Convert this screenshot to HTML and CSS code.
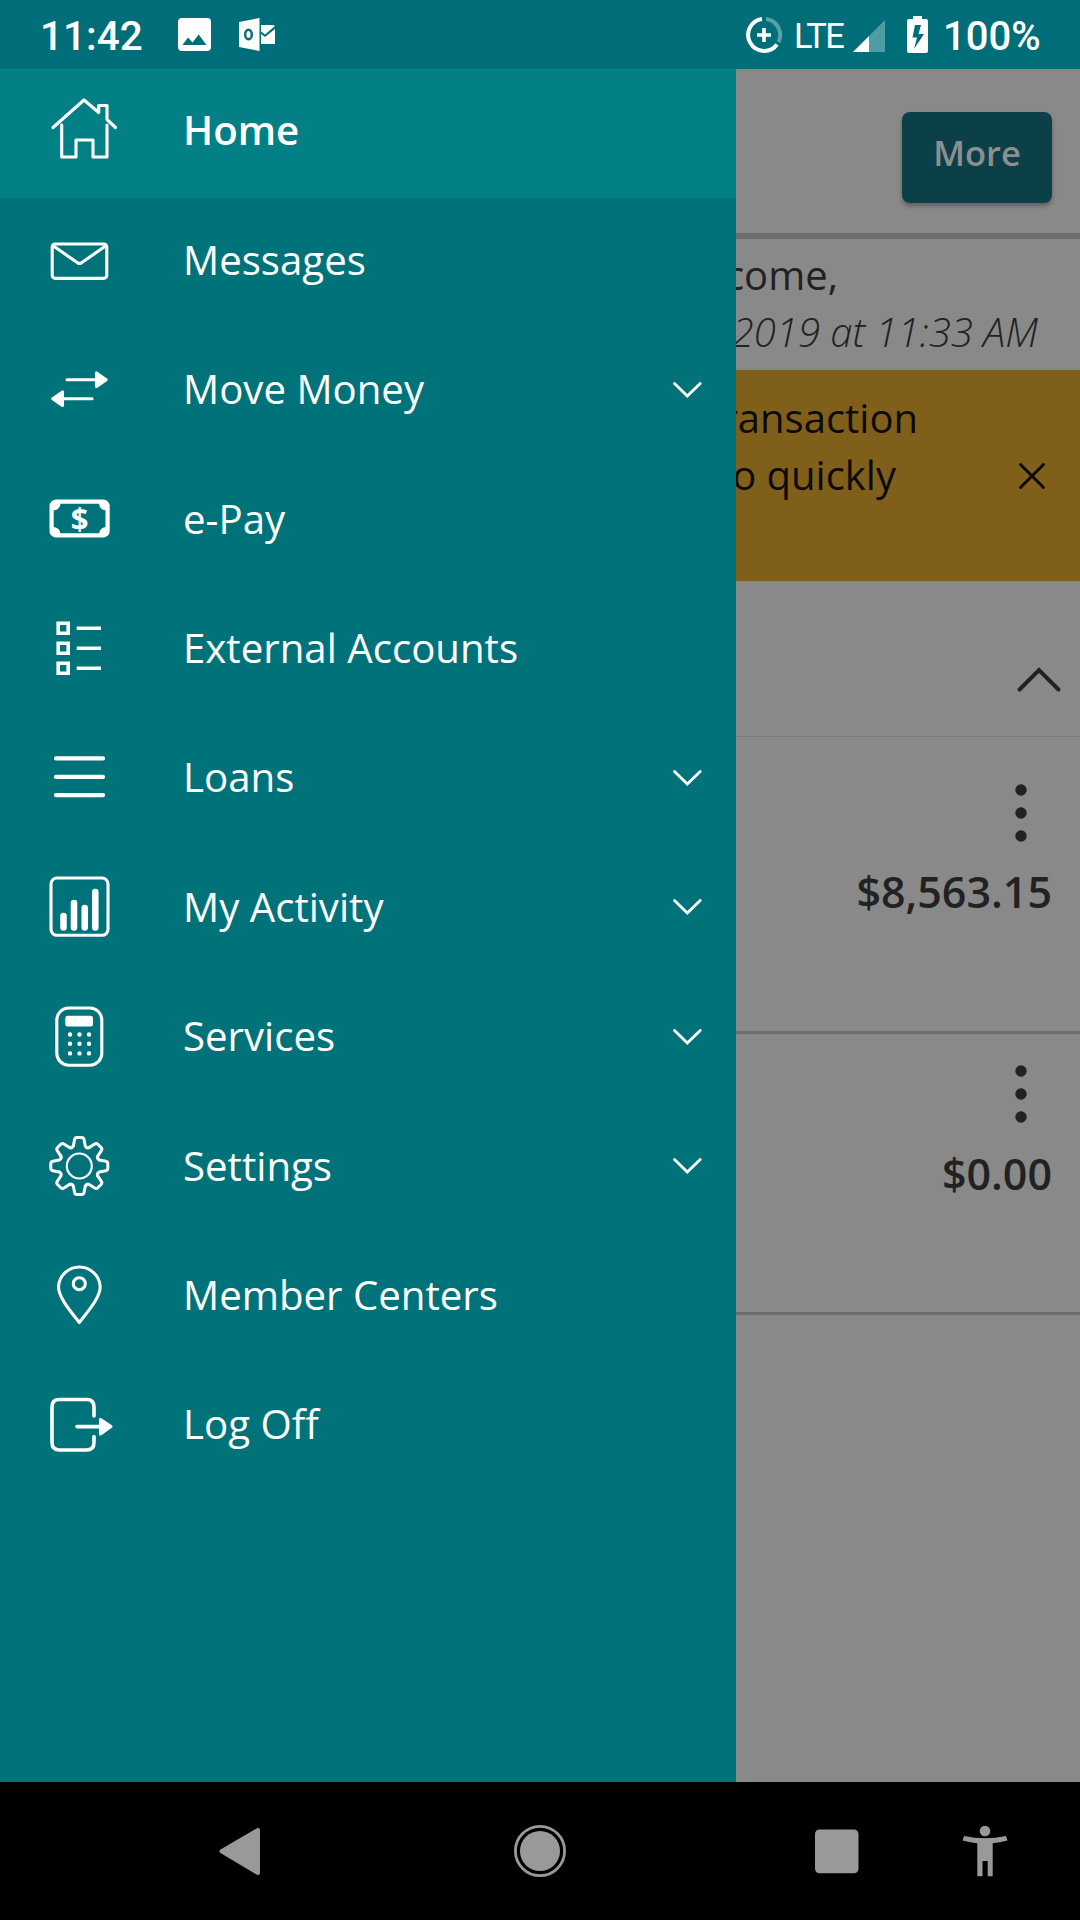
FILE: index.html
```html
<!DOCTYPE html>
<html lang="en">
  <head>
    <meta charset="utf-8" />
    <title>Home</title>
    <link rel="stylesheet" href="styles.css" />
  </head>
  <body>
    <header class="status-bar">
      <span class="clock">11:42</span>
      <svg class="photo-icon" width="34" height="34" viewBox="0 0 34 34">
        <path fill="#fff" fill-rule="evenodd" d="M4 0H29.500Q33 0 33 4V29Q33 33 29 33H4Q0 33 0 29V4Q0 0 4 0ZM4.500 27H28.500L20.700 16.500L14.500 24.500L10 19.500Z" />
      </svg>
      <svg class="outlook-icon" width="38" height="34" viewBox="0 0 38 34">
        <path fill="#fff" d="M0 4L20.500 0V33L0 29Z" />
        <path fill="#fff" d="M22 7H34L36 8L26 16.500L22 13.500ZM22 16L26 19L36 11V26H22Z" />
        <ellipse cx="9.500" cy="16.500" rx="3.300" ry="4.800" fill="none" stroke="#006e78" stroke-width="2.400" />
      </svg>
      <div class="status-right">
        <svg class="saver-icon" width="38" height="38" viewBox="0 0 38 38" fill="none" stroke="#fff">
          <path stroke-width="4" stroke-opacity=".35" d="M21 3.100A16 16 0 0 1 33.500 26" />
          <path stroke-width="4" d="M17 3.100A16 16 0 1 0 32 28.500" />
          <path stroke-width="3.600" d="M19 12V26M12 19H26" />
        </svg>
        <span class="network">LTE</span>
        <svg class="signal-icon" width="32" height="32" viewBox="0 0 32 32">
          <path fill="#4f9ca3" d="M32 0V32H16V16Z" />
          <path fill="#fff" d="M16 16V32H0Z" />
        </svg>
        <svg class="battery-icon" width="22" height="37" viewBox="0 0 22 37">
          <path fill="#fff" d="M6 0H15V3H19Q21 3 21 5V35Q21 37 19 37H2Q0 37 0 35V5Q0 3 2 3H6Z" />
          <path fill="#006e78" d="M14 9H8L5.500 21.500H10L7 33L17 18H11.500Z" />
        </svg>
        <span class="battery-level">100%</span>
      </div>
    </header>

    <main class="screen">
      <div class="page">
        <div class="page-header">
          <button class="more-btn">More</button>
        </div>
        <div class="welcome">
          <p class="greeting">Welcome,</p>
          <p class="last-login">2019 at 11:33 AM</p>
        </div>
        <div class="alert">
          <div class="alert-text">
            <p>transaction</p>
            <p class="second-line">to quickly</p>
          </div>
          <svg class="alert-close" width="30" height="30" viewBox="0 0 30 30">
            <path d="M3.500 3.500L26.500 26.500M26.500 3.500L3.500 26.500" />
          </svg>
        </div>
        <div class="section-header">
          <svg width="46" height="28" viewBox="0 0 46 28">
            <path d="M3.500 24.500L23 5L42.500 24.500" />
          </svg>
        </div>
        <div class="account first">
          <svg class="dots" width="12" height="58" viewBox="0 0 12 58">
            <circle cx="6" cy="6" r="5.700" /><circle cx="6" cy="29" r="5.700" /><circle cx="6" cy="52" r="5.700" />
          </svg>
          <span class="amount">$8,563.15</span>
        </div>
        <div class="account">
          <svg class="dots" width="12" height="58" viewBox="0 0 12 58">
            <circle cx="6" cy="6" r="5.700" /><circle cx="6" cy="29" r="5.700" /><circle cx="6" cy="52" r="5.700" />
          </svg>
          <span class="amount">$0.00</span>
        </div>
      </div>

      <nav class="drawer">
        <a class="item active">
          <svg class="icon" viewBox="0 0 80 80">
            <path d="M13 36.500L44 9L58.700 21.500V14.500H67V28.500L75.500 36.500M21.700 34V66H36V49H53V66H67V34" />
          </svg>
          <span>Home</span>
        </a>
        <a class="item">
          <svg class="icon" viewBox="0 0 80 80">
            <rect x="12.200" y="23" width="54.600" height="34.400" rx="3" />
            <path d="M13.500 25L37.500 41.800Q39.500 43 41.500 41.800L65.500 25" />
          </svg>
          <span>Messages</span>
        </a>
        <a class="item">
          <svg class="icon" viewBox="0 0 80 80">
            <path d="M27 29.700H57M23 48.700H52" />
            <path class="solid" d="M56.500 23V36.500L66.200 29.700ZM22.500 42V55.500L12.800 48.700Z" />
          </svg>
          <span>Move Money</span>
          <svg class="chevron" viewBox="0 0 32 18"><path d="M3.500 2.500L16.300 15L29.200 2.500" /></svg>
        </a>
        <a class="item">
          <svg class="icon" viewBox="0 0 80 80">
            <rect x="11.600" y="22.700" width="56" height="33.700" rx="4.500" stroke-width="4.200" />
            <path class="fill" d="M12 23H20.500Q21 31.500 12 31.500ZM67.500 23H59Q58.500 31.500 67.500 31.500ZM12 56.500H20.500Q21 48 12 48ZM67.500 56.500H59Q58.500 48 67.500 48Z" />
            <text class="dollar" x="39.500" y="50.500">$</text>
          </svg>
          <span>e-Pay</span>
        </a>
        <a class="item">
          <svg class="icon" viewBox="0 0 80 80">
            <path class="square" d="M18.200 14.300H28.200V24.300H18.200ZM18.200 34.300H28.200V44.300H18.200ZM18.200 54.300H28.200V64.300H18.200ZM36.700 19.300H61M36.700 39.300H61M36.700 59.300H61" />
          </svg>
          <span>External Accounts</span>
        </a>
        <a class="item">
          <svg class="icon" viewBox="0 0 80 80">
            <path stroke-width="4.200" d="M16 20.400H63M16 38.900H63M16 57.200H63" />
          </svg>
          <span>Loans</span>
          <svg class="chevron" viewBox="0 0 32 18"><path d="M3.500 2.500L16.300 15L29.200 2.500" /></svg>
        </a>
        <a class="item">
          <svg class="icon" viewBox="0 0 80 80">
            <rect x="11" y="11" width="57" height="57.300" rx="6" />
            <path stroke-width="6.500" d="M23.500 49V60.500M34 36V60.500M44.700 41V60.500M55.300 25V60.500" />
          </svg>
          <span>My Activity</span>
          <svg class="chevron" viewBox="0 0 32 18"><path d="M3.500 2.500L16.300 15L29.200 2.500" /></svg>
        </a>
        <a class="item">
          <svg class="icon" viewBox="0 0 80 80">
            <rect x="16.800" y="11" width="45" height="57.200" rx="12" />
            <rect class="fill" x="25.300" y="18.800" width="27.700" height="10.800" rx="2.500" />
            <path stroke-width="4.400" d="M30 37.500h0M39.500 37.500h0M49 37.500h0M30 46.800h0M39.500 46.800h0M49 46.800h0M30 56.400h0M39.500 56.400h0M49 56.400h0" />
          </svg>
          <span>Services</span>
          <svg class="chevron" viewBox="0 0 32 18"><path d="M3.500 2.500L16.300 15L29.200 2.500" /></svg>
        </a>
        <a class="item">
          <svg class="icon" viewBox="0 0 80 80">
            <defs>
              <path id="tooth" d="M-6 -20L-4.700 -26.500Q-4.300 -28.500 -2.300 -28.500H2.300Q4.300 -28.500 4.700 -26.500L6 -20Q7.200 -17.400 9.900 -18.400" />
            </defs>
            <g transform="translate(39.300 40)" stroke-width="3">
              <use href="#tooth" />
              <use href="#tooth" transform="rotate(45)" />
              <use href="#tooth" transform="rotate(90)" />
              <use href="#tooth" transform="rotate(135)" />
              <use href="#tooth" transform="rotate(180)" />
              <use href="#tooth" transform="rotate(225)" />
              <use href="#tooth" transform="rotate(270)" />
              <use href="#tooth" transform="rotate(315)" />
              <circle r="12.500" stroke-width="2.200" />
            </g>
          </svg>
          <span>Settings</span>
          <svg class="chevron" viewBox="0 0 32 18"><path d="M3.500 2.500L16.300 15L29.200 2.500" /></svg>
        </a>
        <a class="item">
          <svg class="icon" viewBox="0 0 80 80">
            <path d="M39.300 67.500C30 55.500 18.500 42.500 18.500 31.500A20.900 20.900 0 0 1 60.200 31.500C60.200 42.500 48.600 55.500 39.300 67.500Z" />
            <circle cx="39.300" cy="28.700" r="6" />
          </svg>
          <span>Member Centers</span>
        </a>
        <a class="item">
          <svg class="icon" viewBox="0 0 80 80">
            <path stroke-width="3.600" d="M54 31V22Q54 14.500 46.500 14.500H19.500Q12 14.500 12 22V57.500Q12 65 19.500 65H46.500Q54 65 54 57.500V51.500M37 41.600H61" />
            <path class="solid" d="M60.500 34.500V49L71 41.600Z" />
          </svg>
          <span>Log Off</span>
        </a>
      </nav>
    </main>

    <footer class="nav-bar">
      <svg width="1080" height="138" viewBox="0 0 1080 138">
        <path class="back" d="M221.500 69.300L258 48V91Z" />
        <circle cx="540" cy="69" r="20" />
        <circle class="ring" cx="540" cy="69" r="24.600" />
        <rect x="815" y="47.500" width="43.500" height="43.800" rx="4.500" />
        <circle cx="985" cy="49" r="5.300" />
        <path d="M964 54Q985 58.500 1006 54L1007.500 58.500Q1000 60.600 992.700 61.300V94.200H987.700V79H982.500V94.200H977.300V61.300Q970 60.600 962.700 58.500Z" />
      </svg>
    </footer>
  </body>
</html>
```
FILE: styles.css
```css
* {
  box-sizing: border-box;
}

body {
  margin: 0;
  width: 1080px;
  height: 1920px;
  display: flex;
  flex-direction: column;
  overflow: hidden;
  font-family: "Open Sans", sans-serif;
  background: #000;
}

p {
  margin: 0;
}

/* Status bar */
.status-bar {
  height: 69px;
  display: flex;
  align-items: center;
  padding-left: 40px;
  background: #006e78;
  color: #fff;
  font-family: Roboto, sans-serif;
  font-size: 40px;
}

.clock {
  width: 138px;
  font-size: 40.5px;
  font-weight: 500;
  padding-top: 3px;
}

.outlook-icon {
  margin-left: 27px;
}

.status-right {
  display: flex;
  align-items: center;
  margin-left: auto;
  padding-right: 38px;
}

.network {
  width: 59px;
  margin-left: 11px;
  padding-top: 2px;
  font-size: 34.5px;
  letter-spacing: -1.7px;
}

.signal-icon {
  margin-top: 3px;
}

.battery-icon {
  margin-left: 22px;
}

.battery-level {
  width: 99px;
  margin-left: 14px;
  padding-top: 3px;
  font-weight: 500;
}

/* Dimmed page behind the drawer */
.screen {
  position: relative;
  height: 1713px;
  background: #898989;
}

.page {
  color: #222;
}

.page-header {
  height: 170px;
  padding: 43px 28px 0 0;
  display: flex;
  justify-content: flex-end;
  border-bottom: 6px solid #6e6e6e;
}

.more-btn {
  width: 150px;
  height: 91px;
  padding: 0 0 11px;
  border: none;
  border-radius: 8px;
  background: #0c4048;
  color: #8b8f90;
  font-family: inherit;
  font-size: 34.5px;
  font-weight: 600;
  box-shadow: 0 3px 4px rgba(0, 0, 0, 0.3);
}

.welcome {
  height: 131px;
  padding-top: 7px;
  font-size: 40px;
  line-height: 57px;
  text-align: right;
}

.greeting {
  padding-right: 242px;
}

.last-login {
  padding-right: 42px;
  font-style: italic;
  font-weight: 300;
}

.alert {
  height: 211px;
  padding: 19px 33px 0 0;
  display: flex;
  justify-content: flex-end;
  background: #805f1b;
  color: #0d0b08;
  font-size: 40px;
  line-height: 57px;
  text-align: right;
}

.alert-text {
  margin-right: 99px;
}

.second-line {
  padding-right: 22px;
}

.alert-close {
  margin-top: 72px;
  fill: none;
  stroke: #0d0b08;
  stroke-width: 3;
  stroke-linecap: round;
}

.section-header {
  height: 156px;
  display: flex;
  justify-content: flex-end;
  padding: 84px 18px 0 0;
  border-bottom: 1px solid #7b7b7b;
}

.section-header svg {
  fill: none;
  stroke: #222;
  stroke-width: 4;
  stroke-linecap: round;
}

.account {
  height: 281px;
  padding: 31px 28px 0 0;
  display: flex;
  flex-direction: column;
  align-items: flex-end;
  border-bottom: 3px solid #6e6e6e;
}

.account.first {
  height: 297px;
  padding-top: 47px;
}

.dots {
  margin-right: 25px;
  fill: #222;
}

.amount {
  margin-top: 21px;
  font-size: 43px;
  font-weight: 600;
  line-height: 60px;
}

.first .amount {
  margin-top: 20px;
}

/* Drawer */
.drawer {
  position: absolute;
  top: 0;
  left: 0;
  width: 736px;
  height: 100%;
  background: #00737a;
}

.item {
  height: 129.37px;
  padding: 0 33px 5px 40px;
  display: flex;
  align-items: center;
  color: #fff;
  font-size: 40.2px;
}

.item span {
  margin: -2px 0 0 63px;
}

.active {
  background: #037f86;
  font-weight: 600;
}

.item.active span {
  margin-top: -4px;
}

.icon {
  width: 80px;
  height: 80px;
  fill: none;
  stroke: #fff;
  stroke-width: 3.1;
  stroke-linecap: round;
  stroke-linejoin: round;
}

.icon .solid {
  fill: #fff;
}

.icon .fill {
  fill: #fff;
  stroke: none;
}

.icon .square {
  stroke-width: 3.6;
  stroke-linecap: butt;
  stroke-linejoin: miter;
}

.icon .dollar {
  fill: #fff;
  stroke: none;
  font-size: 31px;
  font-weight: 700;
  text-anchor: middle;
}

.chevron {
  width: 32px;
  height: 18px;
  margin-left: auto;
  fill: none;
  stroke: #fff;
  stroke-width: 2.8;
  stroke-linecap: round;
}

/* System navigation */
.nav-bar {
  height: 138px;
  background: #000;
}

.nav-bar svg {
  display: block;
  fill: #999;
}

.back {
  stroke: #999;
  stroke-width: 4;
  stroke-linejoin: round;
}

.ring {
  fill: none;
  stroke: #999;
  stroke-width: 2.8;
}
```
